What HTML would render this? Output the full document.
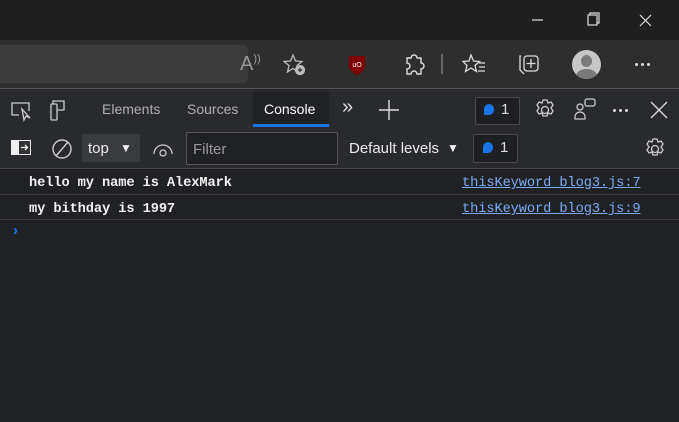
<!DOCTYPE html><html><head><style>
body{margin:0;width:679px;height:422px;overflow:hidden;background:#202124;font-family:"Liberation Sans",sans-serif;position:relative}
.a{position:absolute}
.mono{font-family:"Liberation Mono",monospace;font-size:13.7px;color:#f0f0f0;font-weight:bold;letter-spacing:-0.1px}
.link{color:#7cacf8;text-decoration:underline;font-weight:normal}
</style></head><body>
<div class="a" style="left:0;top:0;width:679px;height:40px;background:#1f1f1f"></div>
<svg class="a" style="top:10px;left:530px" width="140" height="20" stroke="#e0e0e0" fill="none" stroke-width="1.2">
<line x1="2" y1="10" x2="13" y2="10"/><rect x="58" y="5" width="9" height="10"/><path d="M60 5V3h9v10h-2"/><path d="M110 5l11 11M121 5l-11 11"/></svg>
<div class="a" style="left:0;top:40px;width:679px;height:48px;background:#2e2e2e"></div>
<div class="a" style="left:0;top:45px;width:248px;height:38px;background:#3b3b3b;border-radius:0 6px 6px 0"></div>
<div class="a" style="left:240px;top:53px;font-size:20px;color:#999">A<span style="font-size:11px;vertical-align:top">))</span></div>
<svg class="a" style="left:283px;top:52px" width="26" height="26" fill="none" stroke="#bbb" stroke-width="1.3"><path d="M10 3l2.5 6 6.5.5-5 4 1.5 6.5L10 16.5 4.5 20 6 13.5 1 9.5l6.5-.5z"/><circle cx="17" cy="18" r="4.5" fill="#bbb"/><path d="M17 16v4M15 18h4" stroke="#2e2e2e"/></svg>
<svg class="a" style="left:348px;top:54px" width="18" height="22"><path d="M1 2h16v9c0 5-4 8-8 10-4-2-8-5-8-10z" fill="#800000"/><text x="9" y="13" font-size="7" fill="#fff" text-anchor="middle" font-family="Liberation Sans">uO</text></svg>
<svg class="a" style="left:403px;top:52px" width="22" height="24" fill="none" stroke="#ddd" stroke-width="1.4"><path d="M4 6h4a3 3 0 016 0h4v5a3 3 0 010 6v5H14a3 3 0 00-6 0H4v-5a3 3 0 000-6z"/></svg>
<div class="a" style="left:441px;top:54px;width:2px;height:20px;background:#666"></div>
<svg class="a" style="left:462px;top:52px" width="26" height="24" fill="none" stroke="#ddd" stroke-width="1.3"><path d="M9 3l2.5 6 6 .5-4.5 4 1.5 6L9 16 3.5 19.5 5 13.5 1 9.5l6-.5z"/><path d="M17 11h6M17 15h6M16 19h7"/></svg>
<svg class="a" style="left:517px;top:50px" width="26" height="26" fill="none" stroke="#ddd" stroke-width="1.3"><path d="M4 6h-1v14l4 4"/><rect x="7" y="6" width="14" height="15" rx="3"/><path d="M14 9v9M9.5 13.5h9"/></svg>
<div class="a" style="left:572px;top:50px;width:29px;height:29px;border-radius:50%;background:#c8c8c8;overflow:hidden"><div class="a" style="left:9px;top:5px;width:11px;height:12px;border-radius:50%;background:#7a7a7a"></div><div class="a" style="left:4px;top:19px;width:21px;height:14px;border-radius:50%;background:#7a7a7a"></div></div>
<div class="a" style="left:635px;top:63px;width:3px;height:3px;border-radius:50%;background:#ddd;box-shadow:6px 0 #ddd,12px 0 #ddd"></div>
<div class="a" style="left:0;top:88px;width:679px;height:1px;background:#555"></div>
<div class="a" style="left:0;top:89px;width:679px;height:40px;background:#292a2d"></div>
<svg class="a" style="left:10px;top:100px" width="60" height="24" fill="none" stroke="#ccc" stroke-width="1.3"><path d="M9 15H2V3h17v8"/><path d="M12 9l2 11 2-4 4 2z"/><rect x="41" y="4" width="6" height="16" rx="1"/><path d="M43 4V1h11v9h-7"/></svg>
<div class="a" style="left:102px;top:101px;font-size:14px;color:#b0b0b0">Elements</div>
<div class="a" style="left:187px;top:101px;font-size:14px;color:#b0b0b0">Sources</div>
<div class="a" style="left:253px;top:92px;width:76px;height:34px;background:#202124"></div>
<div class="a" style="left:264px;top:101px;font-size:14px;color:#fff">Console</div>
<div class="a" style="left:253px;top:124px;width:76px;height:3px;background:#1a73e8"></div>
<div class="a" style="left:342px;top:96px;font-size:20px;color:#ddd">»</div>
<svg class="a" style="left:378px;top:99px" width="22" height="22" stroke="#ddd" stroke-width="1.4"><path d="M11 1v20M1 11h20"/></svg>
<div class="a" style="left:475px;top:97px;width:43px;height:26px;border:1px solid #4a4a4a;border-radius:2px;background:#1e1f22"></div>
<div class="a" style="left:484px;top:104px;width:10px;height:11px;border-radius:5px 5px 5px 0;background:#1a73e8"></div>
<div class="a" style="left:501px;top:101px;color:#ddd;font-size:15px">1</div>
<svg class="a" style="left:533px;top:98px" width="24" height="24" fill="none" stroke="#ccc" stroke-width="1.3"><circle cx="12" cy="12" r="3.5"/><path d="M10 2h4l1 3 3-1 2 3-2 3 2 3-2 3-3-1-1 3h-4l-1-3-3 1-2-3 2-3-2-3 2-3 3 1z"/></svg>
<svg class="a" style="left:573px;top:97px" width="26" height="26" fill="none" stroke="#ccc" stroke-width="1.3"><circle cx="7" cy="10" r="3"/><path d="M2 20a5 5 0 0110 0v2H2z"/><rect x="12" y="2" width="10" height="7" rx="2"/></svg>
<div class="a" style="left:613px;top:109px;width:3px;height:3px;border-radius:50%;background:#ddd;box-shadow:6px 0 #ddd,12px 0 #ddd"></div>
<svg class="a" style="left:650px;top:101px" width="18" height="18" stroke="#ddd" stroke-width="1.4"><path d="M1 1l16 16M17 1L1 17"/></svg>
<div class="a" style="left:0;top:129px;width:679px;height:39px;background:#292a2d"></div>
<svg class="a" style="left:10px;top:139px" width="22" height="18"><rect x="1" y="1" width="20" height="15" fill="#eee"/><rect x="9" y="2" width="11" height="13" fill="#333"/><path d="M11 8.5h6M15 6l2.5 2.5L15 11" stroke="#eee" fill="none" stroke-width="1.3"/></svg>
<svg class="a" style="left:51px;top:138px" width="22" height="22" fill="none" stroke="#ccc" stroke-width="1.4"><circle cx="11" cy="11" r="9"/><path d="M17 4L5 18"/></svg>
<div class="a" style="left:82px;top:134px;width:58px;height:28px;background:#3a3b3e;border-radius:2px"></div>
<div class="a" style="left:88px;top:140px;color:#eee;font-size:15px">top</div>
<div class="a" style="left:120px;top:141px;color:#eee;font-size:12px">▼</div>
<svg class="a" style="left:152px;top:139px" width="22" height="20" fill="none" stroke="#ccc" stroke-width="1.3"><path d="M2 15a9 9 0 0118 0"/><circle cx="11" cy="14" r="3"/></svg>
<div class="a" style="left:186px;top:132px;width:150px;height:31px;border:1px solid #555;border-radius:2px;background:#202124"></div>
<div class="a" style="left:193px;top:141px;color:#999;font-size:15px">Filter</div>
<div class="a" style="left:349px;top:140px;color:#eee;font-size:15px">Default levels</div>
<div class="a" style="left:447px;top:141px;color:#eee;font-size:12px">▼</div>
<div class="a" style="left:473px;top:134px;width:43px;height:27px;border:1px solid #4a4a4a;border-radius:2px;background:#1e1f22"></div>
<div class="a" style="left:483px;top:142px;width:10px;height:11px;border-radius:5px 5px 5px 0;background:#1a73e8"></div>
<div class="a" style="left:500px;top:139px;color:#ddd;font-size:15px">1</div>
<svg class="a" style="left:643px;top:137px" width="24" height="24" fill="none" stroke="#ccc" stroke-width="1.3"><circle cx="12" cy="12" r="3.5"/><path d="M10 2h4l1 3 3-1 2 3-2 3 2 3-2 3-3-1-1 3h-4l-1-3-3 1-2-3 2-3-2-3 2-3 3 1z"/></svg>
<div class="a" style="left:0;top:168px;width:679px;height:1px;background:#4a4a4a"></div>
<div class="a mono" style="left:29px;top:176px">hello my name is AlexMark</div>
<div class="a mono link" style="left:462px;top:176px">thisKeyword_blog3.js:7</div>
<div class="a" style="left:0;top:194px;width:679px;height:1px;background:#3a3a3a"></div>
<div class="a mono" style="left:29px;top:202px">my bithday is 1997</div>
<div class="a mono link" style="left:462px;top:202px">thisKeyword_blog3.js:9</div>
<div class="a" style="left:0;top:219px;width:679px;height:1px;background:#3a3a3a"></div>
<div class="a" style="left:13px;top:222px;color:#1a73e8;font-size:15px;font-weight:bold">›</div>
</body></html>
